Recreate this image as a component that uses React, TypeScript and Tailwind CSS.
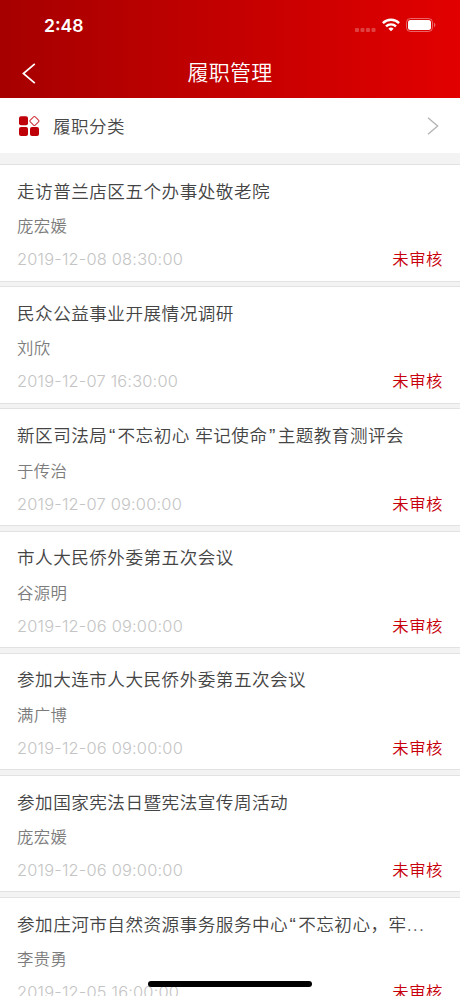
interface DutyRecord {
  id: number;
  title: string;
  name: string;
  time: string;
}

const RECORDS: DutyRecord[] = [
  { id: 1, title: "走访普兰店区五个办事处敬老院", name: "庞宏媛", time: "2019-12-08 08:30:00" },
  { id: 2, title: "民众公益事业开展情况调研", name: "刘欣", time: "2019-12-07 16:30:00" },
  { id: 3, title: "新区司法局“不忘初心 牢记使命”主题教育测评会", name: "于传治", time: "2019-12-07 09:00:00" },
  { id: 4, title: "市人大民侨外委第五次会议", name: "谷源明", time: "2019-12-06 09:00:00" },
  { id: 5, title: "参加大连市人大民侨外委第五次会议", name: "满广博", time: "2019-12-06 09:00:00" },
  { id: 6, title: "参加国家宪法日暨宪法宣传周活动", name: "庞宏媛", time: "2019-12-06 09:00:00" },
  { id: 7, title: "参加庄河市自然资源事务服务中心“不忘初心，牢...", name: "李贵勇", time: "2019-12-05 16:00:00" },
];

function StatusBar() {
  return (
    <div className="flex h-[50px] items-center justify-between pl-11 pr-[24px] pt-px">
      <span className="text-[17.6px] font-semibold leading-none">2:48</span>
      <div className="flex items-center">
        <svg width="21" height="4" viewBox="0 0 21 4" className="mt-[9px]" fill="#fff" fillOpacity="0.25">
          <rect x="0" width="4" height="4" rx="1" />
          <rect x="5.5" width="4" height="4" rx="1" />
          <rect x="11" width="4" height="4" rx="1" />
          <rect x="16.5" width="4" height="4" rx="1" />
        </svg>
        <svg width="18" height="14" viewBox="0 0 18 14" className="-mt-px ml-[6px]" fill="none" stroke="#fff" strokeWidth="2.4">
          <path d="M.9 5.1a11.6 11.6 0 0 1 16.2 0" />
          <path d="M4 8.4a7.1 7.1 0 0 1 10 0" />
          <path d="M9 13.3 6.4 10.8a3.8 3.8 0 0 1 5.2 0Z" fill="#fff" stroke="none" />
        </svg>
        <svg width="30" height="14" viewBox="0 0 30 14" className="-mt-px ml-[6px]">
          <rect x=".5" y=".5" width="26" height="13" rx="4" fill="none" stroke="#fff" strokeOpacity="0.4" />
          <rect x="2" y="2" width="23" height="10" rx="2.5" fill="#fff" />
          <path d="M28 4.8a2.4 2.4 0 0 1 0 4.4Z" fill="#fff" fillOpacity="0.4" />
        </svg>
      </div>
    </div>
  );
}

function Header() {
  return (
    <header className="h-[98px] shrink-0 bg-linear-to-r from-[#a60000] to-[#e20000] text-white">
      <StatusBar />
      <div className="grid h-[46px] grid-cols-[1fr_auto_1fr] items-center">
        <svg width="14" height="21" viewBox="0 0 14 21" className="ml-[22px]" fill="none" stroke="#fff" strokeWidth="1.7">
          <path d="M12.8.8 1.4 10.5l11.4 9.7" />
        </svg>
        <h1 className="pb-px text-[21px] leading-none tracking-[0.2px]">履职管理</h1>
      </div>
    </header>
  );
}

function CategoryRow() {
  return (
    <div className="flex h-[55px] shrink-0 items-center bg-white pl-[19px] pr-[21px] pt-px">
      <svg width="21" height="21" viewBox="0 0 21 21" fill="#c00008">
        <rect x="0" y=".2" width="9" height="9" rx="2" />
        <rect x="0" y="11" width="9" height="9" rx="2" />
        <rect x="11" y="11" width="9" height="9" rx="2" />
        <rect x="11.9" y="1.5" width="7" height="7" rx="1.2" transform="rotate(45 15.4 5)" fill="none" stroke="#cf3a40" strokeWidth="1.1" />
      </svg>
      <span className="ml-[13px] pt-px text-[17.6px] leading-none tracking-[0.4px] text-[#484848]">履职分类</span>
      <svg width="12" height="18" viewBox="0 0 12 18" className="ml-auto" fill="none" stroke="#b5b5b8" strokeWidth="1.4">
        <path d="m1 .8 9.6 8.2L1 17.2" />
      </svg>
    </div>
  );
}

// Curly quotes and dots get a little more room than the latin font gives them
function Title({ text }: { text: string }) {
  return (
    <h2 className="h-6 whitespace-nowrap text-[17.6px] leading-6 tracking-[0.48px] text-[#444]">
      {text.split(/([“”]|\.\.\.)/).map((part, i) => {
        if (part === "“" || part === "”") {
          return <span key={i} className="pl-[1.5px] pr-[1.8px] font-['Liberation_Sans'] text-[19px] leading-none">{part}</span>;
        }
        if (part === "...") {
          return <span key={i} className="tracking-[1.2px]">{part}</span>;
        }
        return part;
      })}
    </h2>
  );
}

function RecordCard({ record }: { record: DutyRecord }) {
  return (
    <li className="flex h-[117.5px] flex-col border-y border-[#e2e2e2] bg-white px-[17px] pt-[14.6px]">
      <Title text={record.title} />
      <p className="mt-[10.6px] h-6 text-[16.4px] leading-6 tracking-[0.4px] text-[#7c7c7c]">{record.name}</p>
      <div className="mt-[9px] flex h-6 items-center justify-between leading-6">
        <span className="text-[16.4px] tracking-[0.2px] text-[#c4c4c4]">{record.time}</span>
        <span className="text-[16.4px] tracking-[0.5px] text-[#c7000b]">未审核</span>
      </div>
    </li>
  );
}

export default function App() {
  return (
    <div className="relative flex h-[996px] w-[460px] flex-col overflow-hidden bg-[#f3f3f3] font-['Inter','Noto_Sans_CJK_SC',sans-serif] font-[350]">
      <Header />
      <CategoryRow />
      <ul className="mt-[11px] flex flex-col gap-[4.7px]">
        {RECORDS.map((record) => (
          <RecordCard key={record.id} record={record} />
        ))}
      </ul>
      {/* Home indicator */}
      <div className="absolute bottom-[9px] left-[148px] h-[6px] w-[164px] rounded-full bg-black" />
    </div>
  );
}
